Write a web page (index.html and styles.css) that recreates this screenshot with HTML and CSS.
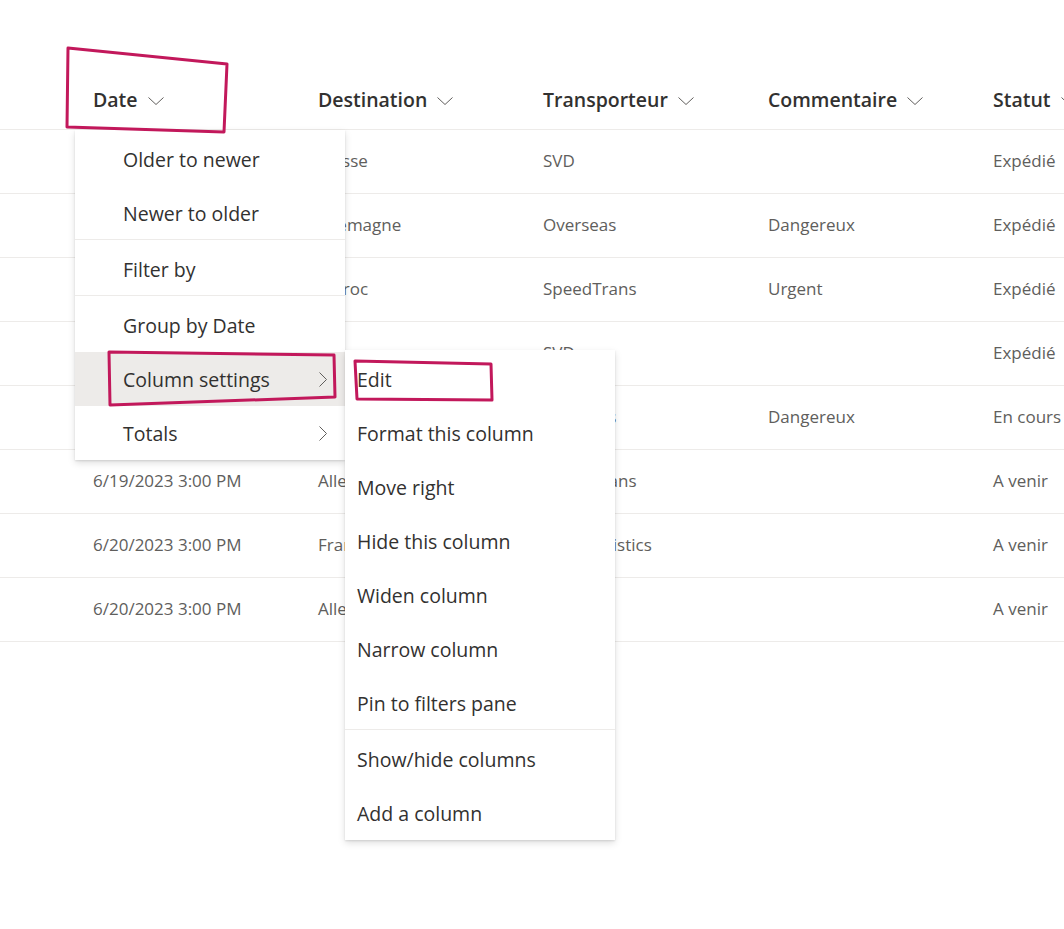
FILE: index.html
```html
<!DOCTYPE html>
<html lang="fr">
<head>
<meta charset="utf-8">
<title>Liste</title>
<link rel="stylesheet" href="styles.css">
</head>
<body>
<div class="page">
  <div class="list">
    <div class="row head">
      <div class="cell first"><span class="htext">Date</span><svg class="chev" viewBox="0 0 16 8"><path d="M0.5 0.5 L8 7.5 L15.5 0.5"/></svg></div>
      <div class="cell"><span class="htext">Destination</span><svg class="chev" viewBox="0 0 16 8"><path d="M0.5 0.5 L8 7.5 L15.5 0.5"/></svg></div>
      <div class="cell"><span class="htext">Transporteur</span><svg class="chev" viewBox="0 0 16 8"><path d="M0.5 0.5 L8 7.5 L15.5 0.5"/></svg></div>
      <div class="cell"><span class="htext">Commentaire</span><svg class="chev" viewBox="0 0 16 8"><path d="M0.5 0.5 L8 7.5 L15.5 0.5"/></svg></div>
      <div class="cell"><span class="htext">Statut</span><svg class="chev" viewBox="0 0 16 8"><path d="M0.5 0.5 L8 7.5 L15.5 0.5"/></svg></div>
    </div>
    <div class="row"><div class="cell first">6/12/2023 3:00 PM</div><div class="cell">Suisse</div><div class="cell">SVD</div><div class="cell"></div><div class="cell">Expédié</div></div>
    <div class="row"><div class="cell first">6/13/2023 3:00 PM</div><div class="cell">Allemagne</div><div class="cell">Overseas</div><div class="cell">Dangereux</div><div class="cell">Expédié</div></div>
    <div class="row"><div class="cell first">6/14/2023 3:00 PM</div><div class="cell">Maroc</div><div class="cell">SpeedTrans</div><div class="cell">Urgent</div><div class="cell">Expédié</div></div>
    <div class="row"><div class="cell first">6/15/2023 3:00 PM</div><div class="cell">Suisse</div><div class="cell">SVD</div><div class="cell"></div><div class="cell">Expédié</div></div>
    <div class="row"><div class="cell first">6/16/2023 3:00 PM</div><div class="cell">France</div><div class="cell">Overseas</div><div class="cell">Dangereux</div><div class="cell">En cours</div></div>
    <div class="row"><div class="cell first">6/19/2023 3:00 PM</div><div class="cell">Allemagne</div><div class="cell">SpeedTrans</div><div class="cell"></div><div class="cell">A venir</div></div>
    <div class="row"><div class="cell first">6/20/2023 3:00 PM</div><div class="cell">France</div><div class="cell">Euro Logistics</div><div class="cell"></div><div class="cell">A venir</div></div>
    <div class="row"><div class="cell first">6/20/2023 3:00 PM</div><div class="cell">Allemagne</div><div class="cell">SVD</div><div class="cell"></div><div class="cell">A venir</div></div>
  </div>

  <div class="menu menu-main">
    <div class="item indent">Older to newer</div>
    <div class="item indent">Newer to older</div>
    <div class="divider"></div>
    <div class="item indent">Filter by</div>
    <div class="divider"></div>
    <div class="item indent">Group by Date</div>
    <div class="item indent hover">Column settings<svg class="sub" viewBox="0 0 8 15"><path d="M0.5 0.5 L7.5 7.5 L0.5 14.5"/></svg></div>
    <div class="item indent">Totals<svg class="sub" viewBox="0 0 8 15"><path d="M0.5 0.5 L7.5 7.5 L0.5 14.5"/></svg></div>
  </div>

  <div class="menu menu-sub">
    <div class="item">Edit</div>
    <div class="item">Format this column</div>
    <div class="item">Move right</div>
    <div class="item">Hide this column</div>
    <div class="item">Widen column</div>
    <div class="item">Narrow column</div>
    <div class="item">Pin to filters pane</div>
    <div class="divider"></div>
    <div class="item">Show/hide columns</div>
    <div class="item">Add a column</div>
  </div>

  <svg class="marks" viewBox="0 0 1064 929">
    <polygon points="68,48 227,64 224,132 67,127"/>
    <polygon points="109,352 334,355 335,397 110,405"/>
    <polygon points="355,361 491,364 492,400 357,399"/>
  </svg>
</div>
</body>
</html>
```

FILE: styles.css
```css
html, body {
  margin: 0;
  padding: 0;
  background: #ffffff;
}

.page {
  position: relative;
  width: 1064px;
  height: 929px;
  overflow: hidden;
  font-family: "Open Sans", "Noto Sans", sans-serif;
}

.list {
  padding-top: 70px;
  display: flex;
  flex-direction: column;
}

.row {
  display: flex;
  height: 63px;
  border-bottom: 1px solid #edebe9;
  align-items: center;
  white-space: nowrap;
}

.row.head {
  height: 59px;
}

.row:not(.head) .cell {
  padding-bottom: 3px;
}

.cell {
  flex: 0 0 225px;
  width: 225px;
  box-sizing: border-box;
  font-size: 17px;
  color: #605e5c;
  display: flex;
  align-items: center;
  overflow: visible;
}

.cell.first {
  flex-basis: 318px;
  width: 318px;
  padding-left: 93px;
}

.htext {
  font-size: 19.5px;
  font-weight: 600;
  color: #323130;
}

.chev {
  width: 16px;
  height: 8px;
  margin-left: 10px;
  margin-top: 2px;
  fill: none;
  stroke: #605e5c;
  stroke-width: 1;
}

.menu {
  position: absolute;
  width: 270px;
  background: #ffffff;
  padding: 2px 0 0;
  box-shadow: 0 3.2px 7.2px rgba(0, 0, 0, 0.13), 0 0.6px 1.8px rgba(0, 0, 0, 0.11);
}

.menu-main {
  left: 75px;
  top: 130px;
}

.menu-sub {
  left: 345px;
  top: 350px;
}

.item {
  height: 54px;
  display: flex;
  align-items: center;
  padding: 0 12px;
  font-size: 19.5px;
  color: #323130;
  white-space: nowrap;
  position: relative;
}

.item.indent {
  padding-left: 48px;
}

.item.hover {
  background: #edebe9;
}

.sub {
  position: absolute;
  left: 244px;
  top: 20px;
  width: 8px;
  height: 15px;
  fill: none;
  stroke: #605e5c;
  stroke-width: 1;
}

.divider {
  height: 1px;
  margin-top: -1px;
  margin-bottom: 2px;
  background: #edebe9;
}

.marks {
  position: absolute;
  left: 0;
  top: 0;
  width: 1064px;
  height: 929px;
  pointer-events: none;
}

.marks polygon {
  fill: none;
  stroke: #c2185b;
  stroke-width: 3;
  stroke-linejoin: round;
}
```
